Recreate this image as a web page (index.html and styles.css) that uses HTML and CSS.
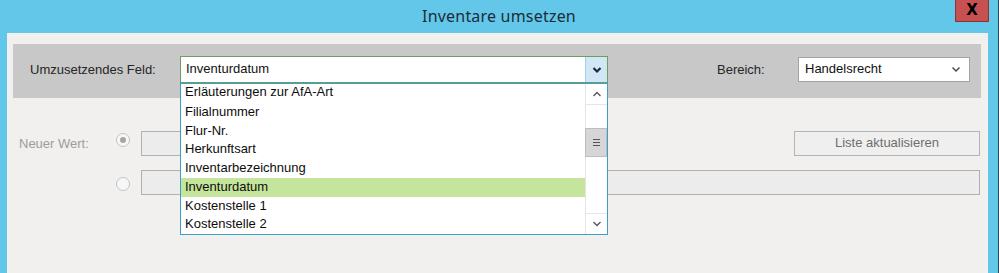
FILE: index.html
```html
<!DOCTYPE html>
<html lang="de">
<head>
<meta charset="utf-8">
<title>Inventare umsetzen</title>
<link rel="stylesheet" href="styles.css">
</head>
<body>
<div class="window">
  <div class="titlebar">
    <span></span>
    <span class="title">Inventare umsetzen</span>
    <div class="close-wrap"><div class="close">X</div></div>
  </div>
  <div class="client">
    <div class="panel">
      <span class="label label-feld">Umzusetzendes Feld:</span>
      <div class="combo combo-focus">
        <span class="combo-text">Inventurdatum</span>
        <span class="combo-btn">
          <svg width="10" height="8" viewBox="0 0 10 8"><polyline points="1.5,2 5,5.5 8.5,2" fill="none" stroke="#1b2b3a" stroke-width="2.2"/></svg>
        </span>
      </div>
      <span class="label label-bereich">Bereich:</span>
      <div class="combo combo-plain">
        <span class="combo-text">Handelsrecht</span>
        <span class="combo-arrow">
          <svg width="10" height="7" viewBox="0 0 10 7"><polyline points="1.5,1.5 5,5 8.5,1.5" fill="none" stroke="#444" stroke-width="1.4"/></svg>
        </span>
      </div>
    </div>
    <div class="row row-1">
      <span class="label label-disabled">Neuer Wert:</span>
      <span class="radio radio-checked"></span>
      <span class="textbox textbox-short"></span>
      <span class="button">Liste aktualisieren</span>
    </div>
    <div class="row row-2">
      <span class="label label-disabled"></span>
      <span class="radio"></span>
      <span class="textbox textbox-long"></span>
    </div>
  </div>
  <div class="dropdown">
    <ul class="items">
      <li>Erläuterungen zur AfA-Art</li>
      <li>Filialnummer</li>
      <li>Flur-Nr.</li>
      <li>Herkunftsart</li>
      <li>Inventarbezeichnung</li>
      <li class="selected">Inventurdatum</li>
      <li>Kostenstelle 1</li>
      <li>Kostenstelle 2</li>
    </ul>
    <div class="scrollbar">
      <div class="sb-btn sb-up">
        <svg width="10" height="6" viewBox="0 0 10 6"><polyline points="1.5,5 5,1.5 8.5,5" fill="none" stroke="#555" stroke-width="1.3"/></svg>
      </div>
      <div class="sb-track">
        <div class="sb-thumb"><span class="grip"></span></div>
      </div>
      <div class="sb-btn sb-down">
        <svg width="10" height="6" viewBox="0 0 10 6"><polyline points="1.5,1 5,4.5 8.5,1" fill="none" stroke="#555" stroke-width="1.3"/></svg>
      </div>
    </div>
  </div>
</div>
</body>
</html>
```

FILE: styles.css
```css
* { box-sizing: border-box; }
html, body { margin: 0; padding: 0; }
body {
  width: 999px;
  height: 273px;
  overflow: hidden;
  font-family: "Liberation Sans", Arial, sans-serif;
  font-size: 13px;
  color: #1a1a1a;
}
.window {
  position: relative;
  width: 999px;
  height: 273px;
  background: #63c7e9;
  padding: 0 10px 0 7px;
  border-right: 1px solid #2c4656;
  display: flex;
  flex-direction: column;
}
.titlebar {
  height: 33px;
  margin: 0 -10px 0 -7px;
  display: grid;
  grid-template-columns: 1fr auto 1fr;
  align-items: start;
}
.title {
  font-family: "Noto Sans", "Open Sans", sans-serif;
  font-size: 16px;
  color: #1b2d38;
  line-height: 33px;
  letter-spacing: 0.2px;
}
.close-wrap {
  display: flex;
  justify-content: flex-end;
  padding-right: 9px;
}
.close {
  width: 34px;
  height: 22px;
  background: #c75050;
  border: 1px solid #8a3434;
  border-top: none;
  color: #000;
  font-family: "DejaVu Sans", sans-serif;
  font-weight: bold;
  font-size: 15px;
  line-height: 20px;
  text-align: center;
}
.client {
  flex: 1;
  background: #f1f0ee;
  padding-top: 11px;
}
.panel {
  margin: 0 7px 0 6px;
  height: 54px;
  background: #c8c8c8;
  display: flex;
  align-items: flex-start;
  padding: 0 11px 0 17px;
}
.label {
  line-height: 15px;
  white-space: nowrap;
}
.label-feld {
  width: 150px;
  margin-top: 18px;
  color: #262626;
}
.label-bereich {
  width: 81px;
  margin-left: auto;
  margin-top: 18px;
  color: #262626;
}
.combo {
  display: flex;
  align-items: center;
  background: #fff;
}
.combo-focus {
  width: 428px;
  height: 27px;
  margin-top: 12px;
  border: 1px solid #6f9e60;
}
.combo-plain {
  width: 172px;
  height: 25px;
  margin-top: 13px;
  border: 1px solid #a3a3a3;
}
.combo-text {
  flex: 1;
  padding-left: 5px;
  color: #111;
  line-height: 15px;
  padding-bottom: 2px;
}
.combo-plain .combo-text { padding-left: 6px; padding-bottom: 3px; }
.combo-btn {
  width: 22px;
  align-self: stretch;
  background: #d2e7f6;
  border-left: 1px solid #a9cde8;
  display: flex;
  align-items: center;
  justify-content: center;
}
.combo-arrow {
  width: 22px;
  display: flex;
  justify-content: center;
  padding-right: 4px;
}
.row {
  display: flex;
  align-items: center;
  padding: 0 8px 0 12px;
  height: 25px;
}
.row-1 { margin-top: 33px; }
.row-2 { margin-top: 14px; }
.label-disabled {
  width: 96px;
  color: #9d9d9d;
}
.radio {
  width: 14px;
  height: 14px;
  margin: 0 11px 0 1px;
  border-radius: 50%;
  border: 1px solid #c3c3c3;
  background: #f7f7f7;
  display: flex;
  align-items: center;
  justify-content: center;
}
.row-1 .radio { margin-top: -7px; }
.row-2 .radio { margin-top: 3px; }
.radio-checked::after {
  content: "";
  width: 6px;
  height: 6px;
  border-radius: 50%;
  background: #a6a6a6;
}
.textbox {
  height: 25px;
  background: #ececec;
  border: 1px solid #b0b0b0;
}
.textbox-short { width: 449px; }
.textbox-long { flex: 1; }
.button {
  margin-left: auto;
  width: 186px;
  height: 25px;
  border: 1px solid #b4b4b4;
  background: #efefef;
  color: #6e6e6e;
  text-align: center;
  line-height: 22px;
}
.dropdown {
  position: absolute;
  left: 180px;
  top: 83px;
  width: 428px;
  height: 152px;
  border: 1px solid #3f9dcc;
  background: #fff;
  display: flex;
}
.items {
  list-style: none;
  margin: 0;
  padding: 0;
  flex: 1;
}
.items li {
  height: 18.75px;
  line-height: 18px;
  padding-left: 4px;
  color: #0d0d0d;
  white-space: nowrap;
}
.items li:first-child { line-height: 16px; }
.items li.selected { background: #c4e59b; }
.scrollbar {
  width: 22px;
  border-left: 1px solid #e4e4e4;
  display: flex;
  flex-direction: column;
}
.sb-btn {
  height: 21px;
  display: flex;
  align-items: center;
  justify-content: center;
}
.sb-up { border-bottom: 1px solid #e6e6e6; }
.sb-down { border-top: 1px solid #e6e6e6; }
.sb-track {
  flex: 1;
  padding-top: 23px;
}
.sb-thumb {
  height: 29px;
  margin-left: -1px;
  background: #d6d6d6;
  border: 1px solid #bdbdbd;
  display: flex;
  align-items: center;
  justify-content: center;
}
.grip {
  width: 7px;
  height: 7px;
  border-top: 1px solid #555;
  border-bottom: 1px solid #555;
  position: relative;
}
.grip::after {
  content: "";
  position: absolute;
  left: 0;
  right: 0;
  top: 2px;
  height: 1px;
  background: #555;
}
```
